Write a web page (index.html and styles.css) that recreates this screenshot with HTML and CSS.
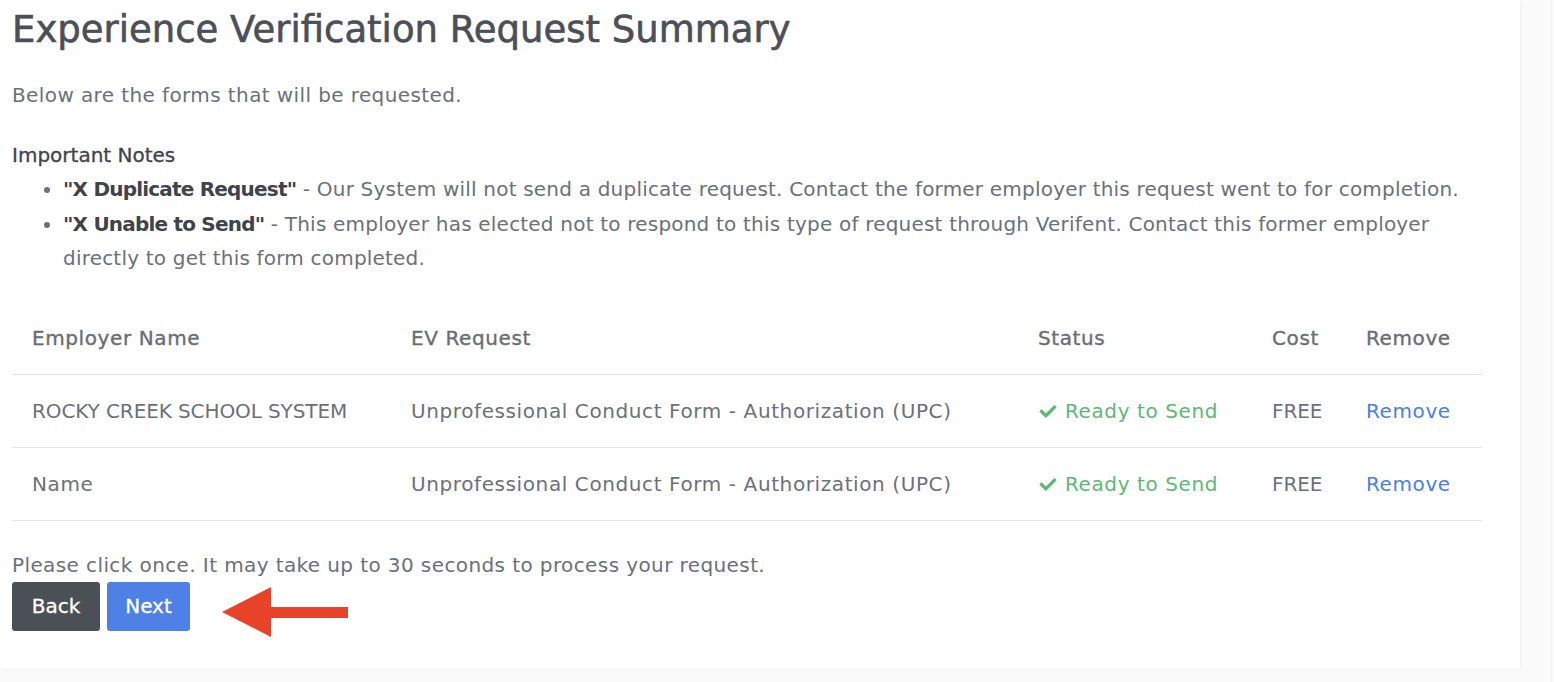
FILE: index.html
```html
<!DOCTYPE html>
<html lang="en">
<head>
<meta charset="utf-8">
<title>Experience Verification Request Summary</title>
<link rel="stylesheet" href="styles.css">
</head>
<body>
<div class="page">
  <main class="card">
    <h1 class="title">Experience Verification Request Summary</h1>
    <p class="lead">Below are the forms that will be requested.</p>
    <div class="notes">
      <div class="notes-title">Important Notes</div>
      <ul class="notes-list">
        <li><strong>"X Duplicate Request"</strong> - Our System will not send a duplicate request. Contact the former employer this request went to for completion.</li>
        <li><strong>"X Unable to Send"</strong> - This employer has elected not to respond to this type of request through Verifent. Contact this former employer directly to get this form completed.</li>
      </ul>
    </div>
    <table class="summary">
      <colgroup>
        <col class="c-emp"><col class="c-ev"><col class="c-status"><col class="c-cost"><col class="c-remove">
      </colgroup>
      <thead>
        <tr><th>Employer Name</th><th>EV Request</th><th>Status</th><th>Cost</th><th>Remove</th></tr>
      </thead>
      <tbody>
        <tr>
          <td class="caps">ROCKY CREEK SCHOOL SYSTEM</td>
          <td>Unprofessional Conduct Form - Authorization (UPC)</td>
          <td class="ready"><svg class="check" viewBox="0 0 512 512"><path d="M173.898 439.404l-166.4-166.4c-9.997-9.997-9.997-26.206 0-36.204l36.203-36.204c9.997-9.998 26.207-9.998 36.204 0L192 312.69 432.095 72.596c9.997-9.997 26.207-9.997 36.204 0l36.203 36.204c9.997 9.997 9.997 26.206 0 36.204l-294.4 294.401c-9.998 9.997-26.207 9.997-36.204-.001z"/></svg>Ready to Send</td>
          <td class="caps">FREE</td>
          <td><a class="link" href="#">Remove</a></td>
        </tr>
        <tr>
          <td>Name</td>
          <td>Unprofessional Conduct Form - Authorization (UPC)</td>
          <td class="ready"><svg class="check" viewBox="0 0 512 512"><path d="M173.898 439.404l-166.4-166.4c-9.997-9.997-9.997-26.206 0-36.204l36.203-36.204c9.997-9.998 26.207-9.998 36.204 0L192 312.69 432.095 72.596c9.997-9.997 26.207-9.997 36.204 0l36.203 36.204c9.997 9.997 9.997 26.206 0 36.204l-294.4 294.401c-9.998 9.997-26.207 9.997-36.204-.001z"/></svg>Ready to Send</td>
          <td class="caps">FREE</td>
          <td><a class="link" href="#">Remove</a></td>
        </tr>
      </tbody>
    </table>
    <p class="hint">Please click once. It may take up to 30 seconds to process your request.</p>
    <div class="actions">
      <button class="btn btn-back" type="button">Back</button>
      <button class="btn btn-next" type="button">Next</button>
      <svg class="arrow" viewBox="0 0 127 50" width="127" height="50"><path d="M0 25 L49 0 L49 20 L126 20 L126 31 L49 31 L49 50 Z" fill="#e84329"/></svg>
    </div>
  </main>
</div>
</body>
</html>
```
FILE: styles.css
```css
html, body {
  margin: 0;
  padding: 0;
  background: #fbfbfc;
}
body {
  font-family: "DejaVu Sans", "Liberation Sans", sans-serif;
  color: #6b7079;
  font-size: 20px;
  letter-spacing: 0.4px;
}
.page {
  width: 1552px;
  min-height: 682px;
  border-right: 1px solid #eef0f3;
  box-sizing: border-box;
}
.card {
  width: 1520px;
  background: #ffffff;
  box-shadow: 1px 1px 3px rgba(0, 0, 0, 0.05);
  padding: 6px 38px 32px 12px;
  box-sizing: border-box;
}
.title {
  margin: 0;
  font-size: 37px;
  font-weight: 500;
  line-height: 48px;
  letter-spacing: 0;
  color: #4b4f56;
  -webkit-text-stroke: 0.6px #4b4f56;
}
.lead {
  margin: 26px 0 0;
  line-height: 30px;
}
.notes {
  margin-top: 30px;
}
.notes-title {
  font-weight: 500;
  color: #3f434a;
  line-height: 30px;
  letter-spacing: 0;
  -webkit-text-stroke: 0.3px #3f434a;
}
.notes-list {
  margin: 2px 0 0;
  padding-left: 51px;
  line-height: 34.5px;
  letter-spacing: 0.2px;
}
.notes-list strong {
  font-weight: 600;
  color: #3f434a;
  letter-spacing: -0.8px;
}
.summary {
  margin-top: 26px;
  width: 1470px;
  border-collapse: collapse;
  table-layout: fixed;
}
.c-emp { width: 379px; }
.c-ev { width: 627px; }
.c-status { width: 234px; }
.c-cost { width: 94px; }
.c-remove { width: 136px; }
.summary th,
.summary td {
  text-align: left;
  padding: 21px 20px;
  line-height: 30px;
  white-space: nowrap;
  letter-spacing: 0.6px;
}
.summary td.caps {
  letter-spacing: -0.1px;
}
.summary th {
  font-weight: 500;
  color: #686d75;
  -webkit-text-stroke: 0.35px #686d75;
  border-bottom: 1px solid #dee2e6;
}
.summary td {
  border-bottom: 1px solid #e6e8eb;
}
.ready {
  color: #5cb874;
}
.check {
  width: 20px;
  height: 17px;
  fill: #5cb874;
  margin-right: 7px;
  vertical-align: -2px;
}
.link {
  color: #4a7fe2;
  text-decoration: none;
}
.hint {
  margin: 29px 0 0;
  line-height: 30px;
}
.actions {
  display: flex;
  align-items: flex-start;
  gap: 7px;
  margin-top: 2px;
}
.btn {
  font-family: inherit;
  font-size: 20px;
  color: #ffffff;
  -webkit-text-stroke: 0.3px #ffffff;
  border: none;
  border-radius: 3px;
  height: 49px;
  padding: 0;
  line-height: 49px;
}
.btn-back {
  background: #4b4f56;
  width: 88px;
}
.btn-next {
  background: #4f80e5;
  width: 83px;
}
.arrow {
  margin-left: 25px;
  margin-top: 5px;
}
```
